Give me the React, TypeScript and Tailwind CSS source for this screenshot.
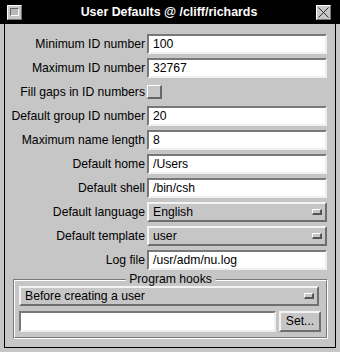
import React from 'react'

const font = "font-['Liberation_Sans',Arial,Helvetica,sans-serif]"

const sunken =
  'border-2 border-t-[#787878] border-l-[#787878] border-b-[#efefef] border-r-[#efefef] bg-white'
const raised =
  'border-2 border-t-[#f4f4f4] border-l-[#f4f4f4] border-b-[#6e6e6e] border-r-[#6e6e6e] bg-[#c6c6c6]'

const Label: React.FC<{ text: string }> = ({ text }) => (
  <span className="w-[141px] pr-[1px] text-right whitespace-nowrap">{text}</span>
)

const TextRow: React.FC<{ label: string; value: string }> = ({ label, value }) => (
  <div className="flex items-center h-[20px]">
    <Label text={label} />
    <div className={`ml-[1px] w-[180px] h-[20px] flex items-center pl-[4px] ${sunken}`}>
      {value}
    </div>
  </div>
)

const Indicator = () => (
  <span className="w-[10px] h-[6px] border border-t-white border-l-white border-b-[#555] border-r-[#555] border-b-2 border-r-2 bg-[#c6c6c6]" />
)

const OptionRow: React.FC<{ label: string; value: string }> = ({ label, value }) => (
  <div className="flex items-center h-[20px]">
    <Label text={label} />
    <div className={`ml-[1px] w-[180px] h-[20px] flex items-center justify-between pl-[4px] pr-[3px] ${raised}`}>
      <span>{value}</span>
      <Indicator />
    </div>
  </div>
)

export default function App() {
  return (
    <div className={`w-[340px] h-[352px] bg-[#c6c6c6] text-black text-[12.2px] leading-none ${font}`}>
      {/* title bar */}
      <div className="h-[24px] bg-black flex items-center px-[7px]">
        <div className="w-[15px] h-[15px] border border-t-white border-l-white border-b-[#777] border-r-[#777] bg-[#c6c6c6] flex items-center justify-center">
          <div className="w-[9px] h-[8px] border border-t-[#666] border-l-[#666] border-b-white border-r-white bg-[#b8b8b8]" />
        </div>
        <div className="flex-1 text-center text-white font-bold text-[12.4px]">
          User Defaults @ /cliff/richards
        </div>
        <div className="w-[15px] h-[15px] mr-[2px] border border-t-white border-l-white border-b-[#777] border-r-[#777] bg-[#c6c6c6]">
          <svg viewBox="0 0 13 13" className="w-[13px] h-[13px]">
            <path d="M1.5 1.5 L11.5 11.5 M11.5 1.5 L1.5 11.5" stroke="#333" strokeWidth="1" fill="none" />
          </svg>
        </div>
      </div>

      {/* body */}
      <div className="mx-[4px] h-[324px] border-l border-r border-b border-black pt-[10px] flex flex-col gap-[4px]">
        <TextRow label="Minimum ID number" value="100" />
        <TextRow label="Maximum ID number" value="32767" />
        <div className="flex items-center h-[20px]">
          <Label text="Fill gaps in ID numbers" />
          <div className="ml-[1px] w-[15px] h-[14px] border border-t-white border-l-white border-b-[#666] border-r-[#666] border-b-2 border-r-2 bg-[#c6c6c6]" />
        </div>
        <TextRow label="Default group ID number" value="20" />
        <TextRow label="Maximum name length" value="8" />
        <TextRow label="Default home" value="/Users" />
        <TextRow label="Default shell" value="/bin/csh" />
        <OptionRow label="Default language" value="English" />
        <OptionRow label="Default template" value="user" />
        <TextRow label="Log file" value="/usr/adm/nu.log" />

        {/* program hooks frame */}
        <div className="relative mt-[5px] ml-[8px] w-[315px] h-[60px] border border-t-[#787878] border-l-[#787878] border-b-white border-r-white">
          <div className="h-full border border-t-white border-l-white border-b-[#787878] border-r-[#787878] pt-[5px] pl-[4px] flex flex-col gap-[5px]">
            <div className={`w-[300px] h-[20px] flex items-center justify-between pl-[4px] pr-[3px] ${raised}`}>
              <span>Before creating a user</span>
              <Indicator />
            </div>
            <div className="flex gap-[3px] h-[21px]">
              <div className={`w-[257px] h-[21px] ${sunken}`} />
              <div className={`w-[42px] h-[21px] flex items-center justify-center ${raised}`}>Set...</div>
            </div>
          </div>
          <span className="absolute left-1/2 -translate-x-1/2 -top-[7px] px-[4px] bg-[#c6c6c6] whitespace-nowrap">
            Program hooks
          </span>
        </div>
      </div>
    </div>
  )
}
